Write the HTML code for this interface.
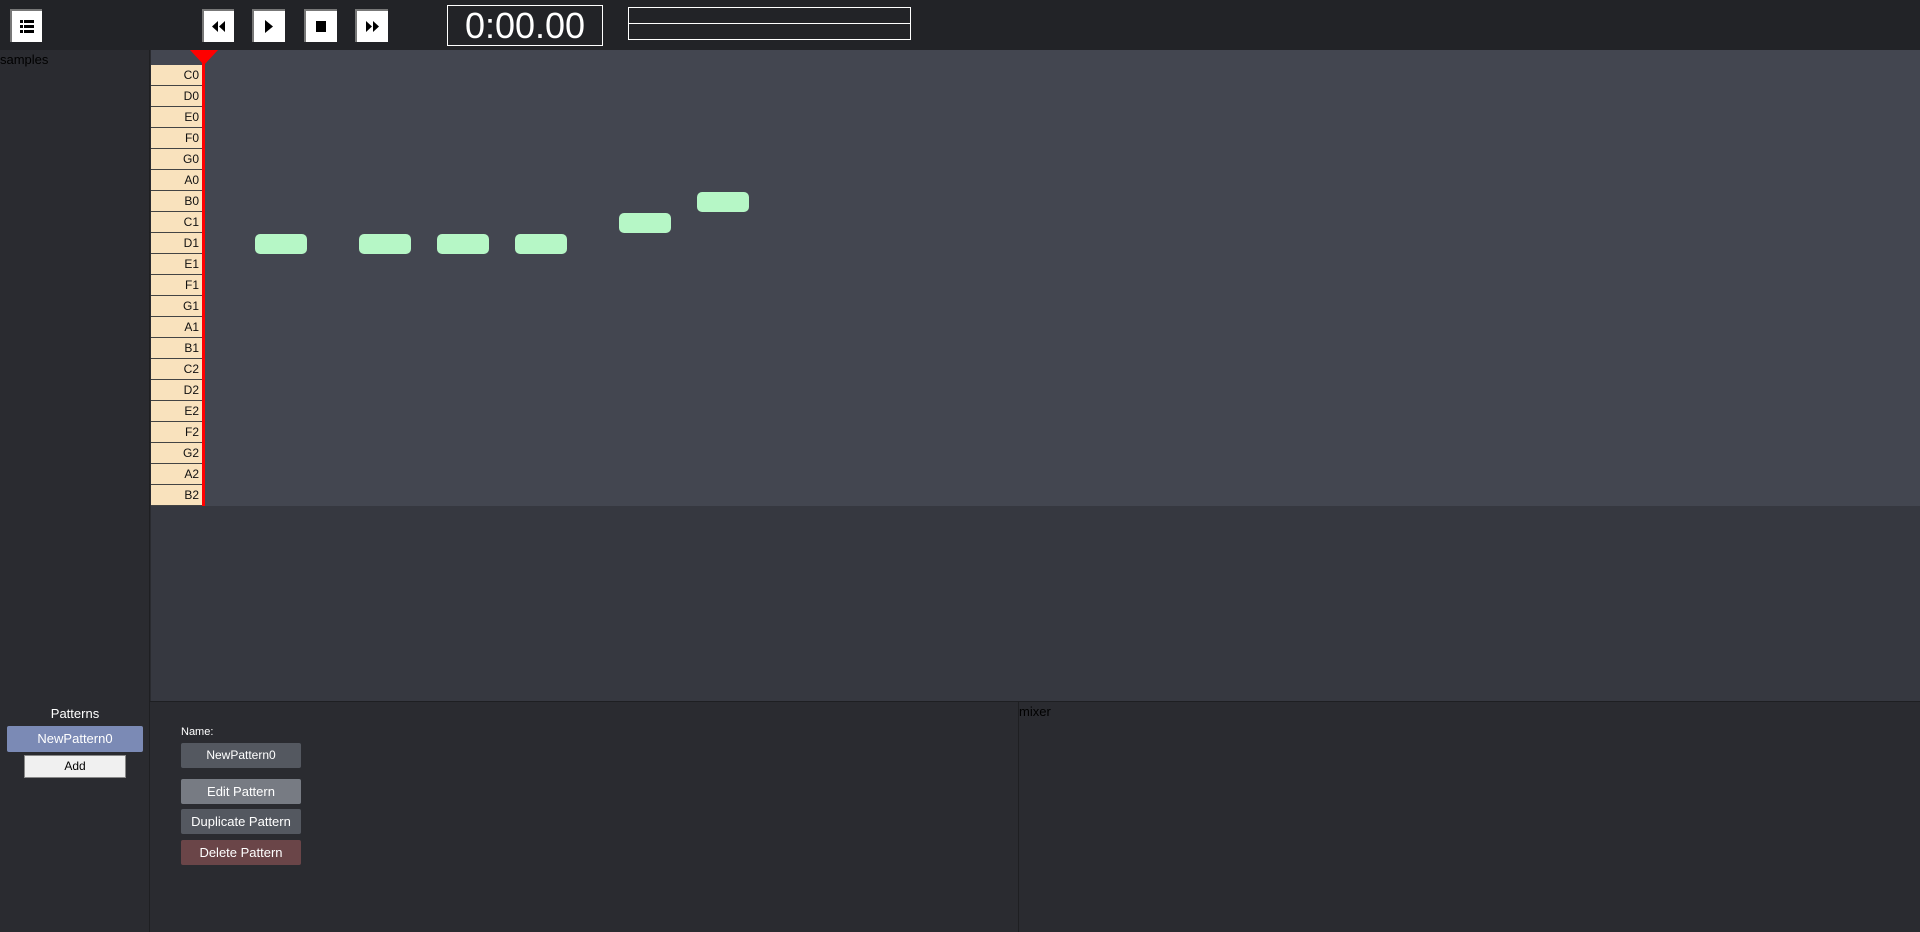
<!DOCTYPE html><html><head><style>
*{margin:0;padding:0;box-sizing:border-box}
body{width:1920px;height:932px;overflow:hidden;background:#2a2b30;font-family:"Liberation Sans",sans-serif;position:relative}
.a{position:absolute}
.tb{left:0;top:0;width:1920px;height:50px;background:#222327}
.btn{background:#fff;border-top:2px solid #777;border-left:2px solid #777}
.key{left:151px;width:51px;height:21px;background:#f9e2bd;border-bottom:1px solid #444;font-size:12px;text-align:right;padding-right:3px;line-height:20px;color:#111}
.note{height:20px;background:#b6f7c6;border-radius:5px}
.pb{left:181px;width:120px;border-radius:2px;color:#fff;font-size:13px;text-align:center}
</style></head><body>
<div class="a tb"></div>
<div class="a btn" style="left:10px;top:9px;width:32px;height:33px"><svg width="30" height="31"><g fill="#000"><rect x="8" y="9" width="3" height="3"/><rect x="12" y="9" width="10" height="3"/><rect x="8" y="14" width="3" height="3"/><rect x="12" y="14" width="10" height="3"/><rect x="8" y="19" width="3" height="3"/><rect x="12" y="19" width="10" height="3"/></g></svg></div>
<div class="a btn" style="left:202px;top:9px;width:32px;height:33px"><svg width="30" height="31"><path d="M14 10L8 15.5L14 21ZM21 10L15 15.5L21 21Z"/></svg></div>
<div class="a btn" style="left:252px;top:9px;width:33px;height:33px"><svg width="30" height="31"><path d="M11 9L19 15.5L11 22Z"/></svg></div>
<div class="a btn" style="left:304px;top:9px;width:33px;height:33px"><svg width="30" height="31"><rect x="10" y="10" width="10" height="11"/></svg></div>
<div class="a btn" style="left:355px;top:9px;width:33px;height:33px"><svg width="30" height="31"><path d="M9 10L15 15.5L9 21ZM16 10L22 15.5L16 21Z"/></svg></div>
<div class="a" style="left:447px;top:5px;width:156px;height:41px;border:1px solid #fff;color:#fff;font-size:36px;text-align:center;line-height:39px">0:00.00</div>
<div class="a" style="left:628px;top:7px;width:283px;height:33px;border:1px solid #fff"><div style="margin-top:15px;border-top:1px solid #fff"></div></div>
<div class="a" style="left:0;top:50px;width:150px;height:652px;background:#2a2b30;border-right:1px solid #1e1f22"></div>
<div class="a" style="left:0;top:52px;font-size:13px;color:#000">samples</div>
<div class="a" style="left:151px;top:50px;width:1769px;height:456px;background:#434650"></div>
<div class="a" style="left:151px;top:506px;width:1769px;height:196px;background:#363840"></div>
<div class="a" style="left:150px;top:701px;width:1770px;height:1px;background:#1e1f22"></div>
<div class="a" style="left:0;top:702px;width:150px;height:230px;border-right:1px solid #1e1f22"></div>
<div class="a" style="left:1018px;top:702px;width:1px;height:230px;background:#1e1f22"></div>
<div class="a" style="left:0;top:706px;width:150px;text-align:center;color:#fff;font-size:13px">Patterns</div>
<div class="a" style="left:7px;top:726px;width:136px;height:26px;background:#7b8ab5;border-radius:2px;color:#fff;font-size:13px;text-align:center;line-height:26px">NewPattern0</div>
<div class="a" style="left:24px;top:755px;width:102px;height:23px;background:#f0f0f0;border:1px solid #888;font-size:12px;text-align:center;line-height:21px">Add</div>
<div class="a" style="left:181px;top:726px;color:#fff;font-size:11px">Name:</div>
<div class="a pb" style="top:743px;height:25px;line-height:25px;background:#545860;font-size:12px">NewPattern0</div>
<div class="a pb" style="top:779px;height:25px;line-height:25px;background:#777b83">Edit Pattern</div>
<div class="a pb" style="top:809px;height:25px;line-height:25px;background:#545860">Duplicate Pattern</div>
<div class="a pb" style="top:840px;height:25px;line-height:25px;background:#6a4548">Delete Pattern</div>
<div class="a" style="left:1019px;top:704px;color:#000;font-size:13px">mixer</div>
<div class="a key" style="top:65px">C0</div><div class="a key" style="top:86px">D0</div><div class="a key" style="top:107px">E0</div><div class="a key" style="top:128px">F0</div><div class="a key" style="top:149px">G0</div><div class="a key" style="top:170px">A0</div><div class="a key" style="top:191px">B0</div><div class="a key" style="top:212px">C1</div><div class="a key" style="top:233px">D1</div><div class="a key" style="top:254px">E1</div><div class="a key" style="top:275px">F1</div><div class="a key" style="top:296px">G1</div><div class="a key" style="top:317px">A1</div><div class="a key" style="top:338px">B1</div><div class="a key" style="top:359px">C2</div><div class="a key" style="top:380px">D2</div><div class="a key" style="top:401px">E2</div><div class="a key" style="top:422px">F2</div><div class="a key" style="top:443px">G2</div><div class="a key" style="top:464px">A2</div><div class="a key" style="top:485px">B2</div>
<div class="a" style="left:202px;top:62px;width:3px;height:444px;background:#f00"></div>
<div class="a" style="left:190px;top:50px;width:0;height:0;border-left:14px solid transparent;border-right:14px solid transparent;border-top:15px solid #f00"></div>
<div class="a note" style="left:255px;top:234px;width:52px"></div>
<div class="a note" style="left:359px;top:234px;width:52px"></div>
<div class="a note" style="left:437px;top:234px;width:52px"></div>
<div class="a note" style="left:515px;top:234px;width:52px"></div>
<div class="a note" style="left:619px;top:213px;width:52px"></div>
<div class="a note" style="left:697px;top:192px;width:52px"></div>
</body></html>
